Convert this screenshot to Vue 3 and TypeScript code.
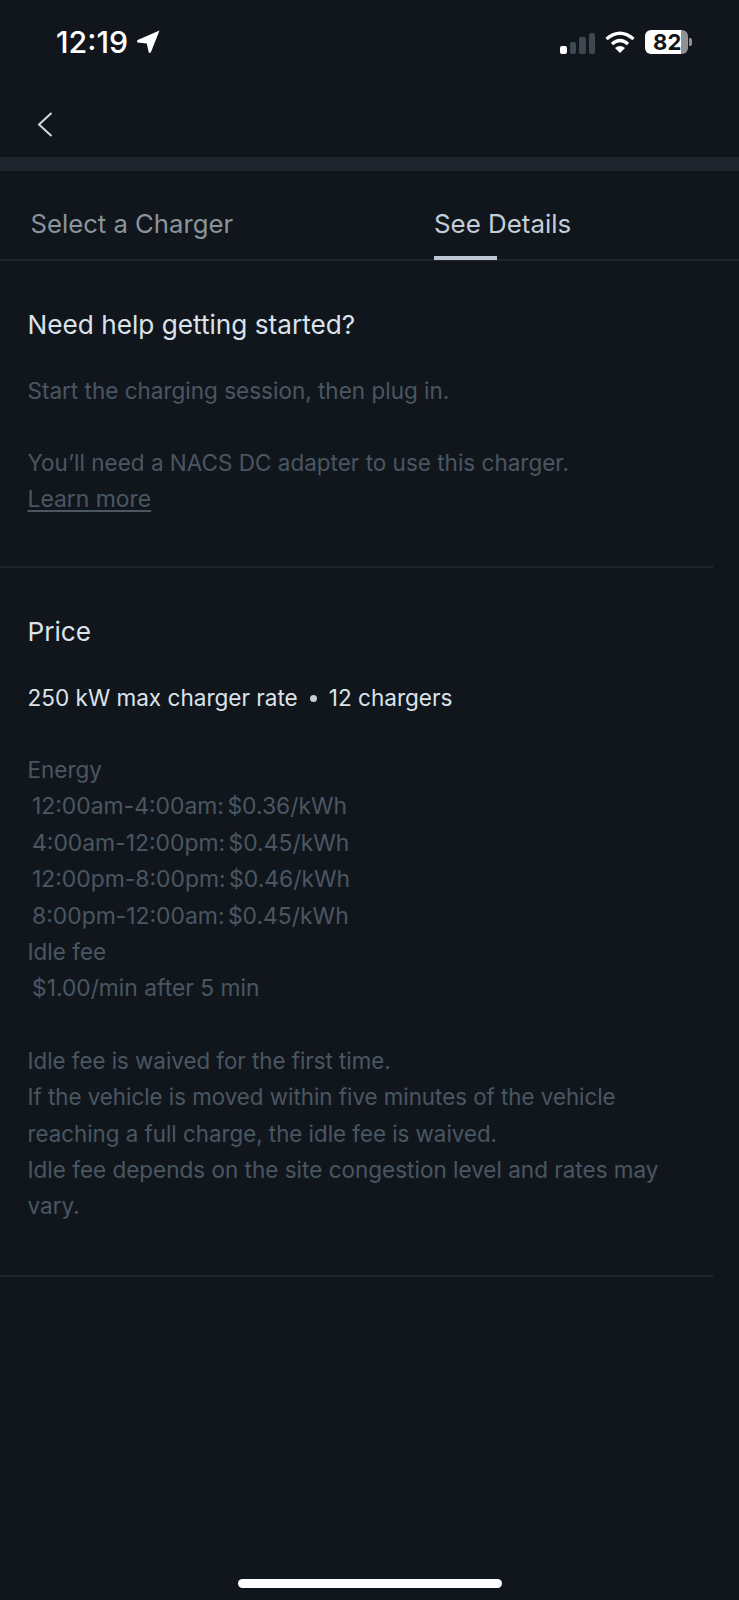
<script setup lang="ts">
const rates: string[] = [
  '12:00am-4:00am: $0.36/kWh',
  '4:00am-12:00pm: $0.45/kWh',
  '12:00pm-8:00pm: $0.46/kWh',
  '8:00pm-12:00am: $0.45/kWh',
]
</script>

<template>
  <div class="screen">
    <header class="status">
      <div class="time">
        <span>12:19</span>
        <svg class="loc" width="24" height="24" viewBox="0 0 24 24"><path d="M23.5 .5 L15 22 Q13.8 24 12.6 22 L10.8 13.4 L1.6 12.4 Q.2 11.2 1.6 10 Z" fill="#fff"/></svg>
      </div>
      <div class="indicators">
        <div class="bars">
          <i class="on b1"></i><i class="b2"></i><i class="b3"></i><i class="b4"></i>
        </div>
        <svg width="30" height="22" viewBox="0 0 30 22" class="wifi">
          <path d="M1.5 8 Q15 -3.5 28.5 8" fill="none" stroke="#fff" stroke-width="3.4"/>
          <path d="M7 13 Q15 6 23 13" fill="none" stroke="#fff" stroke-width="3.4"/>
          <path d="M15 22 L10 17 Q15 13 20 17 Z" fill="#fff"/>
        </svg>
        <div class="battery"><div class="cell"><span>82</span></div><b></b></div>
      </div>
    </header>

    <nav class="nav">
      <svg width="18" height="28" viewBox="0 0 18 28"><path d="M15.5 2 L3 13.5 L15.5 25" fill="none" stroke="#d3dbe2" stroke-width="2"/></svg>
    </nav>
    <div class="band"></div>

    <div class="tabs">
      <div class="tab">Select a Charger</div>
      <div class="tab active">See Details</div>
    </div>

    <section class="sec help">
      <h2>Need help getting started?</h2>
      <p class="muted first">Start the charging session, then plug in.</p>
      <p class="muted gap">You’ll need a NACS DC adapter to use this charger.</p>
      <p class="muted"><a>Learn more</a></p>
    </section>

    <section class="sec price">
      <h2>Price</h2>
      <p class="rate">250 kW max charger rate<span class="dot"></span>12 chargers</p>
      <div class="muted block">
        <p>Energy</p>
        <p v-for="r in rates" :key="r" class="ind slot">{{ r }}</p>
        <p>Idle fee</p>
        <p class="ind">$1.00/min after 5 min</p>
      </div>
      <div class="muted block">
        <p class="tight">Idle fee is waived for the first time.</p>
        <p class="tight">If the vehicle is moved within five minutes of the vehicle reaching a full charge, the idle fee is waived.</p>
        <p>Idle fee depends on the site congestion level and rates may vary.</p>
      </div>
    </section>

    <div class="home"></div>
  </div>
</template>

<style>
html, body { margin: 0; background: #11161d; }
</style>

<style scoped>
.screen {
  position: relative;
  width: 739px;
  height: 1600px;
  background: #11161d;
  overflow: hidden;
  font-family: Inter, "Liberation Sans", sans-serif;
  color: #d3dbe2;
}
p, h2 { margin: 0; }
.status {
  height: 84px;
  box-sizing: border-box;
  padding: 25px 47px 0 56px;
  display: flex;
  justify-content: space-between;
  align-items: flex-start;
}
.time {
  display: flex;
  align-items: center;
  gap: 8px;
  color: #fff;
  font-size: 30.3px;
  font-weight: 500;
  line-height: 34px;
}
.indicators { display: flex; align-items: center; gap: 10px; height: 34px; }
.bars { display: flex; align-items: flex-end; gap: 3px; height: 21px; margin-top: 2px; }
.bars i { width: 6.5px; background: #3e4850; border-radius: 2px; }
.bars .on { background: #fff; }
.b1 { height: 8px; }
.b2 { height: 12px; }
.b3 { height: 17px; }
.b4 { height: 21px; }
.battery { display: flex; align-items: center; gap: 1px; }
.cell {
  width: 43px;
  height: 24px;
  border-radius: 6px;
  background: linear-gradient(90deg, #fff 0 84%, #8f9295 84%);
  display: flex;
  align-items: center;
  padding-left: 8px;
  box-sizing: border-box;
  color: #11161d;
  font-size: 22px;
  font-weight: 700;
  letter-spacing: .2px;
}
.battery b { width: 3px; height: 8px; background: #8f9295; border-radius: 0 2px 2px 0; }
.nav {
  height: 73px;
  box-sizing: border-box;
  padding: 27px 0 0 36px;
}
.nav svg { display: block; }
.band { height: 14px; background: #1f262d; }
.tabs {
  height: 90px;
  box-sizing: border-box;
  border-bottom: 2px solid #1f262d;
  position: relative;
}
.tab {
  position: absolute;
  top: 36px;
  left: 30.5px;
  font-size: 25.7px;
  line-height: 34px;
  color: #8a949c;
}
.tab.active {
  left: 434px;
  height: 53px;
  font-size: 25.9px;
  color: #c3ced8;
}
.tab.active::after {
  content: "";
  position: absolute;
  left: 0;
  bottom: 0;
  width: 63px;
  height: 4px;
  background: #bcc7d2;
}
.sec { margin-right: 26px; border-bottom: 2px solid #1f262d; padding-left: 27.5px; }
h2 { font-size: 26.2px; font-weight: 400; line-height: 34px; color: #dbe3ea; }
.help { height: 307px; box-sizing: border-box; padding-top: 47px; }
.muted { font-size: 22.5px; line-height: 36.4px; color: #4a5661; }
.first { margin-top: 31px; }
.gap { margin-top: 35.4px; }
a { text-decoration: underline; text-underline-offset: 3px; font-size: 22.9px; }
.price { height: 709px; box-sizing: border-box; padding-top: 47px; }
.rate { margin-top: 31px; font-size: 22.55px; line-height: 36px; color: #dbe3ea; display: flex; align-items: center; }
.dot { width: 7px; height: 7px; border-radius: 50%; background: #c3ced8; margin: 0 12px; }
.block { margin-top: 36px; }
.ind { padding-left: 4.5px; font-size: 22.8px; }
.slot { font-size: 22.9px; word-spacing: -3px; }
.tight { font-size: 22.3px; }
.home {
  position: absolute;
  left: 238px;
  top: 1579px;
  width: 264px;
  height: 9px;
  border-radius: 5px;
  background: #fff;
}
</style>
